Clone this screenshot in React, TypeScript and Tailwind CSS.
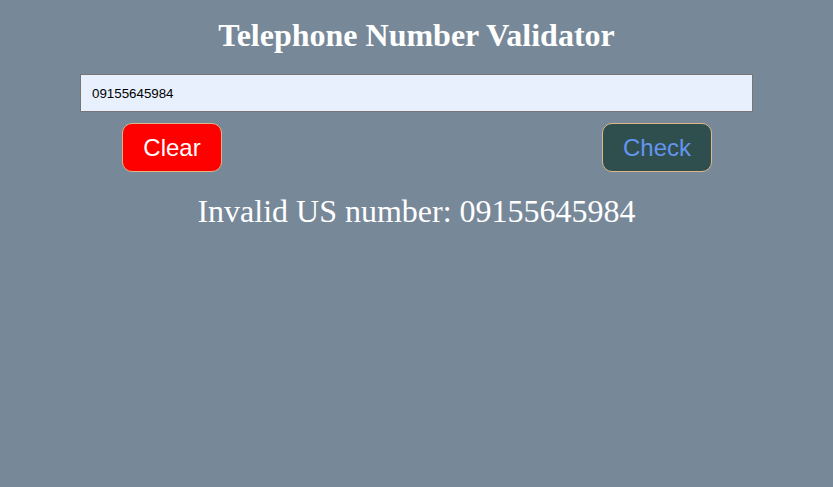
import { useState } from "react";

export default function App() {
  const [value, setValue] = useState("09155645984");
  const [result, setResult] = useState("Invalid US number: 09155645984");

  return (
    <div className="min-h-[487px] w-full bg-[#778899] pt-[15px]">
      <h1 className="text-center font-['Liberation_Serif',serif] text-[32px] font-bold leading-[40px] text-white">
        Telephone Number Validator
      </h1>
      <div className="mx-auto mt-[19px] w-[673px]">
        <input
          value={value}
          onChange={(e) => setValue(e.target.value)}
          className="block h-[38px] w-full border border-[#767676] bg-[#e8f0fe] px-[11px] font-['Liberation_Sans',sans-serif] text-[13.33px] text-black outline-none"
        />
        <div className="mt-[11px] flex justify-between pl-[42px] pr-[41px]">
          <button
            onClick={() => {
              setValue("");
              setResult("");
            }}
            className="h-[49px] w-[100px] rounded-[10px] border border-[#deb887] bg-[#ff0000] font-['Liberation_Sans',sans-serif] text-[24px] text-white"
          >
            Clear
          </button>
          <button
            onClick={() => setResult("Invalid US number: " + value)}
            className="h-[49px] w-[110px] rounded-[10px] border border-[#deb887] bg-[#2f4f4f] font-['Liberation_Sans',sans-serif] text-[24px] text-[#6495ed]"
          >
            Check
          </button>
        </div>
      </div>
      <p className="mt-[19px] text-center font-['Liberation_Serif',serif] text-[32px] leading-[40px] text-white">
        {result}
      </p>
    </div>
  );
}
